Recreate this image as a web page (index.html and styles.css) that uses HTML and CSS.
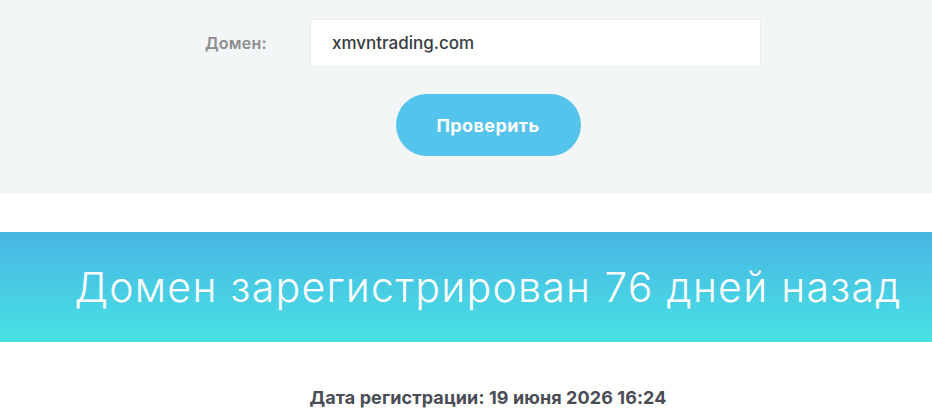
FILE: index.html
```html
<!DOCTYPE html>
<html lang="ru">
<head>
<meta charset="utf-8">
<title>Проверка домена</title>
<link rel="stylesheet" href="styles.css">
</head>
<body>
<section class="check">
  <div class="wrap">
    <form class="form">
      <div class="row">
        <label class="label" for="domain">Домен:</label>
        <div class="input">xmvntrading.com</div>
      </div>
      <div class="actions">
        <button class="btn" type="button">Проверить</button>
      </div>
    </form>
  </div>
</section>
<section class="band">
  <div class="wrap band-inner">
    <h1 class="title">Домен зарегистрирован 76 дней назад</h1>
  </div>
</section>
<section class="info">
  <div class="wrap">
    <p class="date">Дата регистрации: 19 июня 2026 16:24</p>
  </div>
</section>
</body>
</html>
```

FILE: styles.css
```css
* { box-sizing: border-box; }
html, body { margin: 0; padding: 0; }
body {
  font-family: "Inter", "Open Sans", "Liberation Sans", sans-serif;
  background: #ffffff;
  color: #4a4d55;
  width: 932px;
  height: 420px;
  overflow: hidden;
}
.wrap {
  padding-left: 44px;
}
.check {
  background: #f3f6f7;
  height: 194px;
  padding-top: 19px;
}
.row {
  display: flex;
  align-items: center;
  padding-left: 161px;
  gap: 43px;
}
.label {
  width: 62px;
  font-size: 16px;
  font-weight: 600;
  color: #8a8c8f;
  letter-spacing: 0.2px;
}
.input {
  width: 451px;
  height: 48px;
  background: #fff;
  border: 1px solid #e9edef;
  border-radius: 2px;
  padding-left: 21px;
  display: flex;
  align-items: center;
  font-size: 17px;
  font-weight: 500;
  color: #383b42;
}
.actions {
  display: flex;
  justify-content: center;
  margin-top: 27px;
}
.btn {
  width: 185px;
  height: 62px;
  border: 0;
  border-radius: 31px;
  background: #55c4ec;
  color: #fff;
  font-family: inherit;
  font-size: 18px;
  font-weight: 700;
  letter-spacing: 0.4px;
}
.band {
  margin-top: 38px;
  height: 110px;
  background: linear-gradient(180deg, #47b6e3 0%, #48e1e4 100%);
}
.band-inner {
  height: 100%;
  display: flex;
  align-items: center;
  justify-content: center;
}
.title {
  margin: 0;
  font-size: 41px;
  font-weight: 300;
  letter-spacing: 1.3px;
  color: #fff;
  white-space: nowrap;
}
.info {
  padding-top: 45px;
}
.date {
  margin: 0;
  text-align: center;
  font-size: 18px;
  font-weight: 700;
  letter-spacing: 0.1px;
  color: #4a4d55;
}
```
